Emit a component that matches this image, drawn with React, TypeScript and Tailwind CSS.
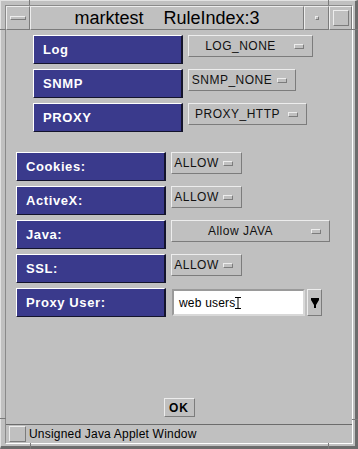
import React from 'react';

const raised =
  'border border-t-[#ededed] border-l-[#ededed] border-r-[#7c7c7c] border-b-[#7c7c7c]';

const rulesTop = [
  { label: 'Log', value: 'LOG_NONE', w: 'w-[125px]' },
  { label: 'SNMP', value: 'SNMP_NONE', w: 'w-[108px]' },
  { label: 'PROXY', value: 'PROXY_HTTP', w: 'w-[119px]' },
];

const rulesBottom = [
  { label: 'Cookies:', value: 'ALLOW', w: 'w-[71px]' },
  { label: 'ActiveX:', value: 'ALLOW', w: 'w-[71px]' },
  { label: 'Java:', value: 'Allow JAVA', w: 'w-[159px]' },
  { label: 'SSL:', value: 'ALLOW', w: 'w-[71px]' },
];

const Label = ({ text }: { text: string }) => (
  <div className="w-[150px] h-[29px] shrink-0 flex items-center pl-[9px] bg-[#3a3a8c] border-t border-l border-white border-r-2 border-b border-r-[#14142c] border-b-[#14142c] text-white font-bold text-[13px] leading-none tracking-[0.6px]">
    {text}
  </div>
);

const Choice = ({ value, w }: { value: string; w: string }) => (
  <div className={`${w} h-[22px] flex items-center bg-[#c0c0c0] ${raised}`}>
    <span className="flex-1 text-center text-[12px] leading-none text-[#111] tracking-[0.5px] pr-[2px]">{value}</span>
    <span className={`w-[10px] h-[5px] mr-[8px] bg-[#c0c0c0] ${raised}`} />
  </div>
);

const Tick = ({ className }: { className: string }) => (
  <span className={`absolute bg-[#7a7a7a] ${className}`} />
);

export default function App() {
  return (
    <div
      className="relative w-[358px] h-[449px] text-black"
      style={{ fontFamily: '"Liberation Sans", Arial, sans-serif' }}
    >
      <div className="w-full h-full bg-[#c0c0c0] border-l border-t border-[#e2e2e2] border-r-[3px] border-b-[3px] border-r-[#6c6c6c] border-b-[#6c6c6c] pl-[4px] pt-[4px] pr-[2px] pb-[2px]">
        <div className="w-full h-full flex flex-col border border-t-[#8a8a8a] border-l-[#8a8a8a] border-r-white border-b-white">
          {/* title bar */}
          <div className="h-[24px] flex shrink-0">
            <div className={`w-[24px] h-full flex items-center justify-center ${raised}`}>
              <span className={`w-[16px] h-[4px] ${raised}`} />
            </div>
            <div className={`flex-1 h-full flex items-center justify-center text-[18px] leading-none ${raised}`}>
              <span>marktest</span>
              <span className="ml-[20px]">RuleIndex:3</span>
            </div>
            <div className={`w-[25px] h-full flex items-center justify-center ${raised}`}>
              <span className={`w-[4px] h-[4px] ${raised}`} />
            </div>
            <div className={`w-[23px] h-full flex items-center justify-center ${raised}`}>
              <span className={`w-[16px] h-[16px] ${raised}`} />
            </div>
          </div>

          {/* content */}
          <div className="flex-1 flex flex-col">
            <div className="pl-[27px] pt-[5px] flex flex-col gap-[5px]">
              {rulesTop.map((r) => (
                <div key={r.label} className="flex gap-[5px] items-start">
                  <Label text={r.label} />
                  <Choice value={r.value} w={r.w} />
                </div>
              ))}
            </div>

            <div className="pl-[10px] mt-[20px] flex flex-col gap-[5px]">
              {rulesBottom.map((r) => (
                <div key={r.label} className="flex gap-[5px] items-start">
                  <Label text={r.label} />
                  <Choice value={r.value} w={r.w} />
                </div>
              ))}
              <div className="flex gap-[5px] items-start">
                <Label text="Proxy User:" />
                <div className="mt-[1px] ml-[1px] flex gap-[2px]">
                  <div className="w-[133px] h-[27px] bg-white border-2 border-t-[#9a9a9a] border-l-[#9a9a9a] border-r-[#d8d8d8] border-b-[#d8d8d8] flex items-center pl-[5px] text-[12px] leading-none tracking-[0.2px]">
                    <span>web users</span>
                    <svg width="6" height="12" viewBox="0 0 6 12" className="ml-[-1px]">
                      <path d="M0 0.5H6M0 11.5H6M3 0V12" stroke="#000" strokeWidth="1" fill="none" />
                    </svg>
                  </div>
                  <div className={`w-[15px] h-[27px] flex items-center justify-center bg-[#c0c0c0] ${raised}`}>
                    <svg width="8" height="10" viewBox="0 0 8 10">
                      <path d="M0 0H8V2L5 7V10H3V7L0 2Z" fill="#000" />
                    </svg>
                  </div>
                </div>
              </div>
            </div>

            <div className="mt-auto mb-[7px] flex justify-center">
              <div className={`w-[31px] h-[19px] flex items-center justify-center font-bold text-[12px] leading-none tracking-[1px] ${raised}`}>
                OK
              </div>
            </div>
          </div>

          {/* status bar */}
          <div className="h-[19px] shrink-0 flex items-center border-t border-t-[#6c6c6c] pl-[3px] gap-[3px]">
            <span className={`w-[17px] h-[16px] bg-[#c0c0c0] ${raised}`} />
            <span className="text-[12px] leading-none tracking-[0.2px]">Unsigned Java Applet Window</span>
          </div>
        </div>
      </div>

      {/* frame resize-corner marks */}
      <Tick className="left-0 top-[29px] w-[6px] h-[1px]" />
      <Tick className="left-[29px] top-0 w-[1px] h-[5px]" />
      <Tick className="right-0 top-[29px] w-[6px] h-[1px]" />
      <Tick className="left-[328px] top-0 w-[1px] h-[5px]" />
      <Tick className="left-0 top-[418px] w-[6px] h-[1px]" />
      <Tick className="left-[30px] bottom-0 w-[1px] h-[6px]" />
      <Tick className="right-0 top-[419px] w-[6px] h-[1px]" />
      <Tick className="left-[328px] bottom-0 w-[1px] h-[6px]" />
    </div>
  );
}
